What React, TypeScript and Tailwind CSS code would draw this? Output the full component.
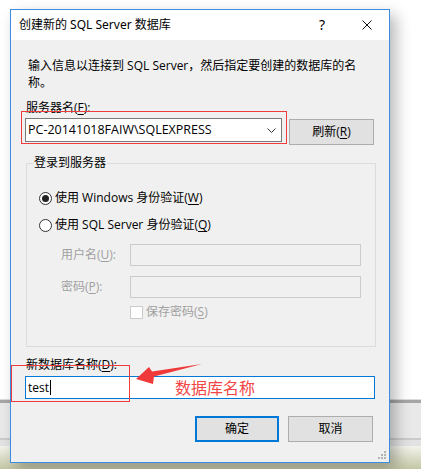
import React from "react";

const FONT = "font-['Open_Sans','Noto_Sans_CJK_SC',sans-serif]";
const TITLE_FONT = "font-['Noto_Sans','Noto_Sans_CJK_SC',sans-serif]";

function Mn({ children }: { children: React.ReactNode }) {
  return <span className="underline underline-offset-2">{children}</span>;
}

function Radio({ checked, children }: { checked?: boolean; children: React.ReactNode }) {
  return (
    <div className="flex h-[18px] items-center pl-[12px]">
      <span className="flex h-[13px] w-[13px] items-center justify-center rounded-full border border-[#333] bg-white">
        {checked && <span className="h-[7px] w-[7px] rounded-full bg-[#222]" />}
      </span>
      <span className="ml-[3px] leading-[18px]">{children}</span>
    </div>
  );
}

function DisabledField({ label }: { label: React.ReactNode }) {
  return (
    <div className="flex h-[22px] items-center pl-[34px]">
      <span className="w-[69px] leading-[22px] text-[#a0a0a0]">{label}</span>
      <div className="h-[22px] w-[231px] border border-[#cccccc] bg-[#f0f0f0]" />
    </div>
  );
}

function Button({ children, primary }: { children: React.ReactNode; primary?: boolean }) {
  return (
    <div
      className={
        primary
          ? "flex h-[26px] w-[84px] items-center justify-center border-2 border-[#0078d7] bg-[#e1e1e1]"
          : "flex h-[26px] w-[85px] items-center justify-center border border-[#adadad] bg-[#e1e1e1]"
      }
    >
      {children}
    </div>
  );
}

export default function App() {
  return (
    <div className={`relative flex h-[469px] w-[421px] flex-col overflow-hidden bg-white text-[12px] text-black ${FONT}`}>
      {/* background application behind the dialog */}
      <div className="h-[399px] bg-white" />
      <div className="h-px bg-[#dcdcdc]" />
      <div className="h-[3px] bg-[#a6a6a6]" />
      <div className="h-[35px] bg-[#e9e9e9]" />
      <div className="h-[2px] bg-[#cbcbcb]" />
      <div className="h-[6px] bg-[#e2e2e2]" />
      <div className="flex-1 bg-gradient-to-b from-[#f3f3ec] to-[#c3c7a4]" />

      {/* dialog */}
      <div className="absolute left-[10px] top-[9px] flex h-[454px] w-[380px] flex-col border border-[#3a8de0] bg-[#f0f0f0] shadow-[6px_6px_14px_rgba(0,0,0,0.28)]">
        <div className={`flex h-[30px] items-center bg-white pl-[8px] ${TITLE_FONT}`}>
          <span className="leading-[30px]">创建新的 SQL Server 数据库</span>
          <span className="ml-auto mr-[37px] text-[14px] leading-[30px]">?</span>
          <svg width="10" height="10" viewBox="0 0 10 10" className="mr-[17px]">
            <path d="M0.5 0.5 L9.5 9.5 M9.5 0.5 L0.5 9.5" stroke="#111" strokeWidth="1" />
          </svg>
        </div>

        <div className="flex flex-col pl-[14px]">
          <div className="mt-[17px] whitespace-nowrap pl-[3px] leading-[17px]">
            <div>输入信息以连接到 SQL Server，然后指定要创建的数据库的名</div>
            <div>称。</div>
          </div>

          <div className="mt-[8px] pl-[1px] leading-[17px]">
            服务器名(<Mn>F</Mn>):
          </div>

          <div className="mt-[2px] flex items-start">
            <div className="flex h-[24px] w-[257px] items-center border border-[#7a7a7a] bg-white pl-[2px] pr-[5px]">
              <span className="text-[12.5px] leading-[22px]">PC-20141018FAIW\SQLEXPRESS</span>
              <svg width="9" height="5" viewBox="0 0 9 5" className="ml-auto">
                <path d="M0.5 0.5 L4.5 4.5 L8.5 0.5" fill="none" stroke="#333" strokeWidth="1" />
              </svg>
            </div>
            <div className="ml-[7px] mt-px">
              <Button>
                刷新(<Mn>R</Mn>)
              </Button>
            </div>
          </div>

          <div className="relative ml-px mt-[18px] h-[184px] w-[350px] border border-[#dcdcdc]">
            <span className="absolute left-[6px] top-[-10px] bg-[#f0f0f0] px-[1px] leading-[18px]">登录到服务器</span>
            <div className="flex flex-col pt-[25px]">
              <Radio checked>
                使用 Windows 身份验证(<Mn>W</Mn>)
              </Radio>
              <div className="mt-[9px]">
                <Radio>
                  使用 SQL Server 身份验证(<Mn>Q</Mn>)
                </Radio>
              </div>
              <div className="mt-[10px]">
                <DisabledField label={<>用户名(<Mn>U</Mn>):</>} />
              </div>
              <div className="mt-[10px]">
                <DisabledField label={<>密码(<Mn>P</Mn>):</>} />
              </div>
              <div className="mt-[7px] flex h-[14px] items-center pl-[103px]">
                <span className="h-[13px] w-[13px] border border-[#cccccc] bg-white" />
                <span className="ml-[3px] leading-[14px] text-[#a0a0a0]">
                  保存密码(<Mn>S</Mn>)
                </span>
              </div>
            </div>
          </div>

          <div className="mt-[9px] pl-[1px] leading-[17px]">
            新数据库名称(<Mn>D</Mn>):
          </div>

          <div className="mt-[3px] flex h-[23px] w-[350px] items-center border border-[#0078d7] bg-white pl-[2px]">
            <span className="leading-[21px]">test</span>
            <span className="ml-px h-[15px] w-px bg-black" />
          </div>

          <div className="mt-[17px] flex gap-[9px] pl-[170px]">
            <Button primary>确定</Button>
            <Button>取消</Button>
          </div>
        </div>

        <svg width="9" height="9" viewBox="0 0 9 9" className="absolute bottom-[2px] right-[2px]">
          <rect x="6" y="0" width="2" height="2" fill="#b4b4b4" />
          <rect x="3" y="3" width="2" height="2" fill="#b4b4b4" />
          <rect x="6" y="3" width="2" height="2" fill="#b4b4b4" />
          <rect x="0" y="6" width="2" height="2" fill="#b4b4b4" />
          <rect x="3" y="6" width="2" height="2" fill="#b4b4b4" />
          <rect x="6" y="6" width="2" height="2" fill="#b4b4b4" />
        </svg>
      </div>

      {/* annotations */}
      <div className="absolute left-[21px] top-[111px] h-[33px] w-[266px] border border-[#ee3b3b]" />
      <div className="absolute left-[11px] top-[365px] h-[37px] w-[119px] border border-[#ee3b3b]" />
      <svg width="421" height="469" className="pointer-events-none absolute left-0 top-0">
        <polygon points="136,379 149,367 152,371.5 202,364 154,376.5 153,384" fill="#f03a3a" />
      </svg>
      <span className={`absolute left-[175px] top-[377px] text-[16px] leading-[22px] text-[#f24646] ${TITLE_FONT}`}>
        数据库名称
      </span>
    </div>
  );
}
